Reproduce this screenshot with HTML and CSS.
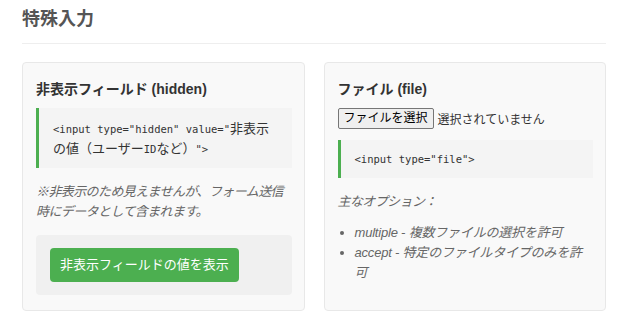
FILE: index.html
```html
<!DOCTYPE html>
<html lang="ja">
<head>
    <meta charset="UTF-8">
    <meta name="viewport" content="width=device-width, initial-scale=1.0">
    <title>特殊入力</title>
    <link rel="stylesheet" href="styles.css">
</head>
<body>
    <div class="section">
        <h2 class="section-title">特殊入力</h2>
        <div class="demo-grid">
            <div class="demo-card">
                <h3>非表示フィールド (hidden)</h3>
                <pre class="code-block">&lt;input type="hidden" value="<span class="ja">非表示</span>
<span class="ja">の値（ユーザー</span>ID<span class="ja">など）</span>"&gt;</pre>
                <p class="note">※非表示のため見えませんが、フォーム送信時にデータとして含まれます。</p>
                <div class="action-box">
                    <button type="button" class="btn-show">非表示フィールドの値を表示</button>
                </div>
            </div>
            <div class="demo-card">
                <h3>ファイル (file)</h3>
                <div class="file-row">
                    <button type="button" class="file-btn">ファイルを選択</button>
                    <span class="file-status">選択されていません</span>
                </div>
                <pre class="code-block">&lt;input type="file"&gt;</pre>
                <p class="note options-title">主なオプション：</p>
                <ul class="options">
                    <li>multiple - 複数ファイルの選択を許可</li>
                    <li>accept - 特定のファイルタイプのみを許可</li>
                </ul>
            </div>
        </div>
    </div>
</body>
</html>
```

FILE: styles.css
```css
body {
    font-family: "Liberation Sans", "Noto Sans CJK JP", sans-serif;
    margin: 0;
    padding: 0;
    background: #fff;
    color: #333;
}
.section {
    padding: 7px 22px 0;
}
.section-title {
    margin: 0;
    font-size: 18px;
    line-height: 24px;
    color: #555;
    padding-bottom: 12px;
    border-bottom: 1px solid #eee;
}
.demo-grid {
    display: grid;
    grid-template-columns: 1fr 1fr;
    gap: 19px;
    margin-top: 18px;
}
.demo-card {
    background: #f9f9f9;
    border: 1px solid #e8e8e8;
    border-radius: 4px;
    padding: 16px 12px 15px 13px;
}
.demo-card h3 {
    margin: 0 0 9px;
    font-size: 14px;
    line-height: 20px;
    color: #333;
}
.code-block {
    margin: 0 0 14px;
    background: #f4f4f4;
    border-left: 3px solid #4caf50;
    padding: 10px 14px;
    font-family: "DejaVu Sans Mono", monospace;
    font-size: 10.5px;
    line-height: 18px;
    color: #333;
    white-space: pre;
}
.code-block .ja {
    font-family: "Noto Sans CJK JP", sans-serif;
    font-size: 13px;
    line-height: 20px;
}
.note {
    margin: 0 0 13px;
    font-size: 13px;
    line-height: 20px;
    font-style: italic;
    letter-spacing: -0.6px;
    color: #666;
}
.action-box {
    background: #f0f0f0;
    border-radius: 4px;
    padding: 13px 14px;
}
.btn-show {
    font-family: inherit;
    font-size: 13px;
    line-height: 18px;
    padding: 8px 10px;
    border: none;
    border-radius: 4px;
    background: #4caf50;
    color: white;
    cursor: pointer;
}
.file-row {
    display: flex;
    align-items: center;
    gap: 4px;
    margin-bottom: 11px;
}
.file-btn {
    font-family: inherit;
    font-size: 12px;
    line-height: 17px;
    padding: 1px 5px;
    border: 1px solid #767676;
    border-radius: 2px;
    background: #efefef;
    color: #000;
}
.file-status {
    font-size: 12px;
    color: #333;
}
.options-title {
    margin-bottom: 11px;
}
.options {
    margin: 0;
    padding-left: 17px;
    font-size: 13px;
    line-height: 20px;
    font-style: italic;
    letter-spacing: -0.2px;
    color: #666;
}
```
